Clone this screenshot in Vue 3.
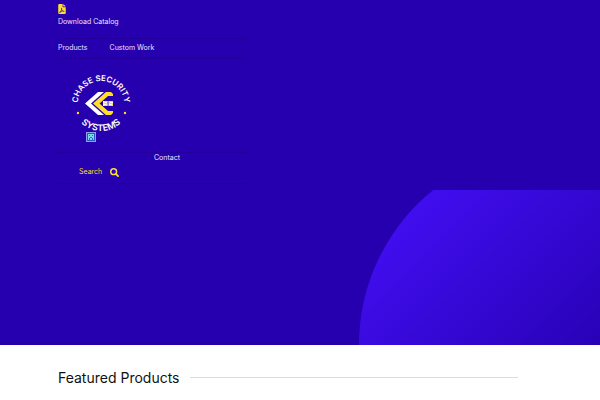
<script setup>
import { ref } from 'vue'

const productLinks = ref([
  { label: 'Products', href: '#products' },
  { label: 'Custom Work', href: '#custom-work' },
])
</script>

<template>
  <div class="page">
    <section class="hero">
      <!-- half circle behind the hero content -->
      <div class="hero-art">
        <div class="hero-circle"></div>
      </div>

      <header class="site-header">
        <a class="catalog" href="#catalog">
          <svg class="pdf-icon" viewBox="0 0 384 512">
            <path
              fill-rule="evenodd"
              d="M48 0h176v136q0 24 24 24h136v304q0 48-48 48H48q-48 0-48-48V48Q0 0 48 0zm208 0 128 128H256zM170 190c-24 0-26 32-10 84-18 46-34 80-50 108-34 18-58 38-54 60 6 30 48 20 86-48 32-12 58-18 84-22 30 18 60 28 82 18 24-16 10-50-66-44-24-16-42-40-52-68 12-48 10-88-20-88zm4 118 32 42-56 14zm-4-94c8 8 8 24 2 42-8-20-8-36-2-42z"
            />
          </svg>
          <span>Download Catalog</span>
        </a>

        <nav class="nav nav-top">
          <a v-for="link in productLinks" :key="link.label" :href="link.href">{{ link.label }}</a>
        </nav>

        <a class="logo" href="#home">
          <svg class="logo-mark" viewBox="0 0 60 60">
            <defs>
              <path id="arc-top" d="M6.5 33A23.5 24 0 1 1 53.5 33" />
              <path id="arc-bottom" d="M1 30A29 29 0 0 0 59 30" />
            </defs>
            <text class="logo-text" text-anchor="middle">
              <textPath href="#arc-top" startOffset="50%">CHASE SECURITY</textPath>
            </text>
            <text class="logo-text logo-text-large" text-anchor="middle">
              <textPath href="#arc-bottom" startOffset="50%">SYSTEMS</textPath>
            </text>
            <circle cx="7" cy="41" r="1.2" fill="#ffdf2b" />
            <circle cx="54" cy="41" r="1.2" fill="#ffdf2b" />
            <path d="M27 20h6L20 31.500l13 11.500h-6L14 31.500z" fill="#fff" />
            <path
              d="M35 20h5l2 2v2h-5l-8.500 7.500L37 39h5v2l-2 2h-5L22 31.500z"
              fill="#ffdf2b"
            />
            <path d="M32 29h4.500v5H32zM37.500 29H42v5h-4.500z" fill="#fff" />
            <path
              d="M36.500 29.500h-3.500v2h3v2H32.500M42 29.500h-3.500v2h3v2H38"
              fill="none"
              stroke="#ffdf2b"
              stroke-width="1"
            />
          </svg>
          <svg class="image-icon" viewBox="0 0 10 10">
            <path d="M0 0h10v10H0z" fill="#8aa2e8" />
            <path d="M1 1h8v8H1z" fill="#2757c5" />
            <path d="M2 2h6v6H2z" fill="#7ed3ed" />
            <path d="M3 3h1v1H3zM6 3h1v1H6zM4 5h2v1H4zM3 6h1v2H3zM6 6h1v2H6z" fill="#2f68c8" />
          </svg>
        </a>

        <nav class="nav nav-bottom">
          <a class="contact" href="#contact">Contact</a>
          <button class="search" type="button">
            <span>Search</span>
            <svg class="search-icon" viewBox="0 0 512 512">
              <circle cx="208" cy="208" r="166" fill="none" stroke="currentColor" stroke-width="84" />
              <path d="M335 335 460 460" stroke="currentColor" stroke-width="100" stroke-linecap="round" />
            </svg>
          </button>
        </nav>
      </header>
    </section>

    <main class="featured">
      <h2>Featured Products</h2>
      <span class="rule"></span>
    </main>
  </div>
</template>

<style>
body {
  margin: 0;
  background: #fff;
}
</style>

<style scoped>
.page {
  font-family: Inter, 'Liberation Sans', sans-serif;
  font-size: 7px;
  line-height: 10px;
}
.hero {
  position: relative;
  min-height: 345px;
  background: #2600ae;
}
.hero-art {
  position: absolute;
  right: 0;
  bottom: 0;
  width: 241px;
  height: 155px;
  overflow: hidden;
}
.hero-circle {
  width: 398px;
  height: 398px;
  margin-top: -44px;
  border-radius: 50%;
  background: linear-gradient(135deg, #430ff5 10%, #2600b0 60%);
}
.site-header {
  position: relative;
  max-width: 188px;
  margin-left: 58px;
  padding-top: 4px;
}
a {
  color: #e9e2ff;
  text-decoration: none;
}
.catalog {
  display: flex;
  flex-direction: column;
  align-items: flex-start;
  gap: 3px;
}
.pdf-icon {
  width: 8px;
  height: 10px;
  fill: #ffdf2b;
}
.nav {
  border-top: 1px solid #23009c;
  border-bottom: 1px solid #23009c;
}
.nav-top {
  display: flex;
  gap: 22px;
  margin-top: 11px;
  padding: 4px 0 5px;
}
.logo {
  display: flex;
  flex-direction: column;
  align-items: flex-start;
  margin-top: 13px;
  padding-left: 13px;
}
.logo-mark {
  width: 60px;
  height: 60px;
  overflow: visible;
}
.logo-text {
  fill: #fff;
  font-size: 8px;
  font-weight: 600;
}
.logo-text-large {
  font-size: 9px;
}
.image-icon {
  width: 10px;
  height: 10px;
  margin-left: 15px;
}
.nav-bottom {
  display: flex;
  flex-direction: column;
  align-items: flex-start;
  gap: 4px;
  margin-top: 10px;
  padding-bottom: 6px;
}
.contact {
  margin-left: 96px;
}
.search {
  display: flex;
  align-items: center;
  gap: 8px;
  margin-left: 21px;
  padding: 0;
  border: 0;
  background: none;
  color: #ffdf2b;
  font: inherit;
  cursor: pointer;
}
.search-icon {
  width: 9px;
  height: 9px;
}
.featured {
  display: flex;
  align-items: center;
  gap: 10px;
  padding: 23px 82px 13px 58px;
}
.featured h2 {
  margin: 0;
  color: #111;
  font-size: 14px;
  font-weight: 400;
  line-height: 19px;
}
.rule {
  flex: 1;
  height: 1px;
  background: #ddd;
}
</style>
